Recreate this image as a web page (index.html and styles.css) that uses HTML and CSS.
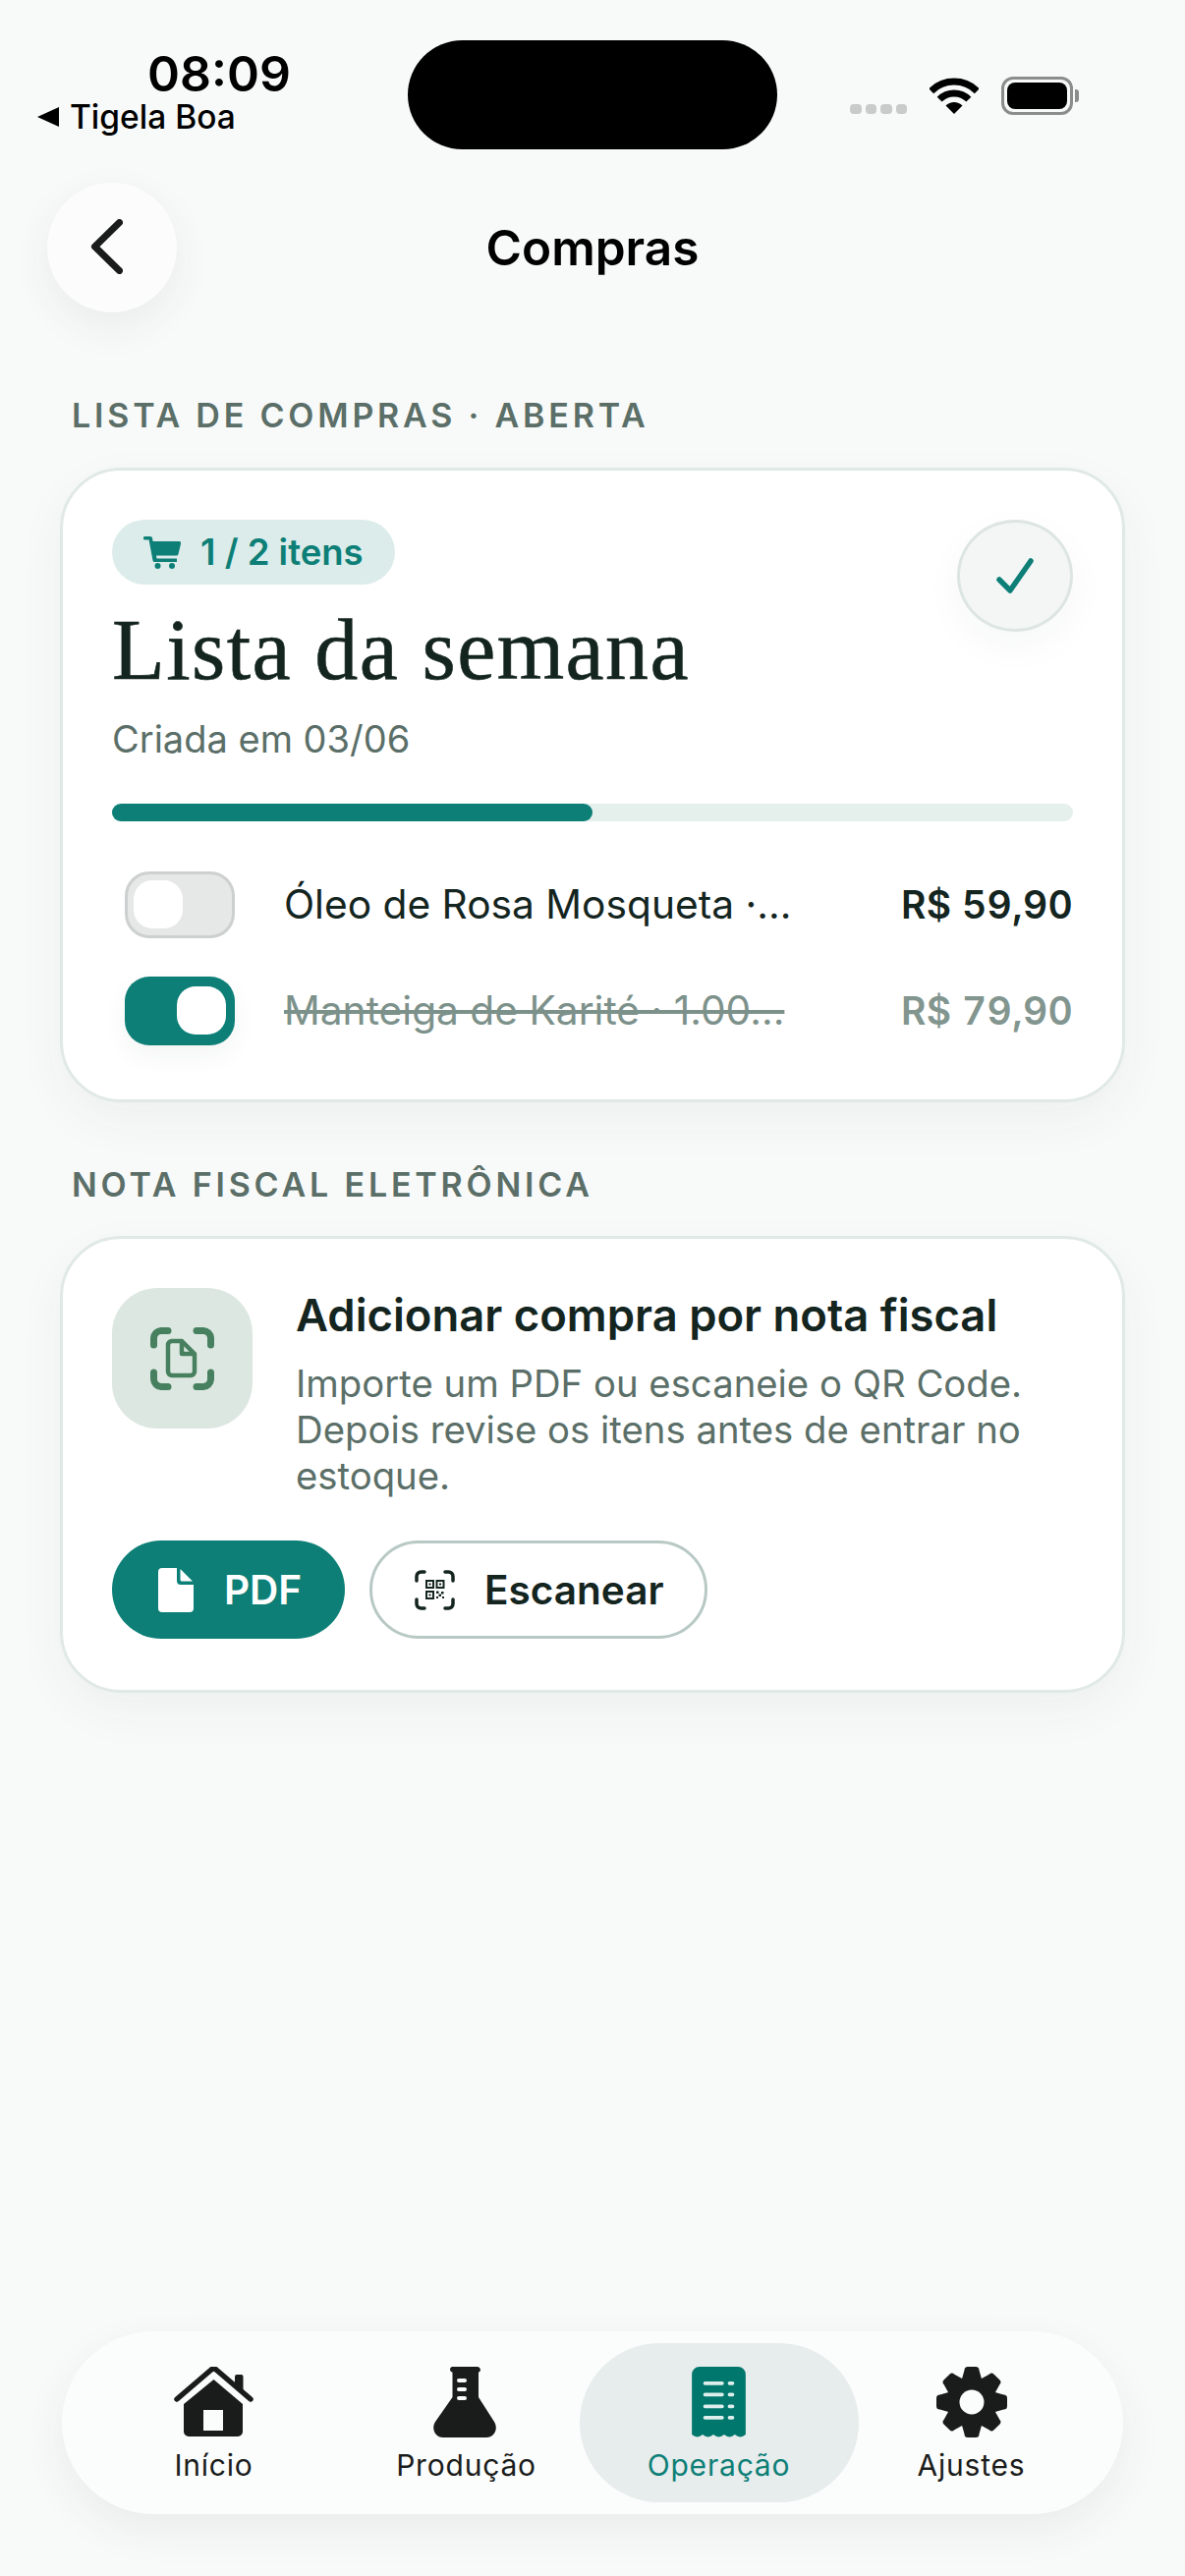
FILE: index.html
```html
<!DOCTYPE html>
<html lang="pt-BR">
<head>
    <meta charset="UTF-8">
    <meta name="viewport" content="width=device-width, initial-scale=1.0">
    <title>Compras</title>
    <link rel="stylesheet" href="styles.css">
</head>
<body>

    <div class="status">
        <div class="status-left">
            <div class="time">08:09</div>
            <div class="back-app"><span class="back-arrow"></span>Tigela Boa</div>
        </div>
        <div class="island"></div>
        <div class="status-right">
            <div class="signal"><span></span><span></span><span></span><span></span></div>
            <svg class="wifi" viewBox="0 0 50 37" width="50" height="37">
                <path d="M1.7 13.7A33 33 0 0 1 48.3 13.7" fill="none" stroke="#000" stroke-width="7"/>
                <path d="M10.15 22.15A21 21 0 0 1 39.85 22.15" fill="none" stroke="#000" stroke-width="7"/>
                <path d="M25 37L16.5 28.5A12 12 0 0 1 33.5 28.5Z" fill="#000"/>
            </svg>
            <div class="battery"><div class="battery-level"></div></div>
            <div class="battery-tip"></div>
        </div>
    </div>

    <header class="top">
        <button class="back-btn">
            <svg viewBox="0 0 33 56" width="33" height="56">
                <path d="M29.5 3.5L4.500 28L29.5 52.5" fill="none" stroke="#1a1c1b" stroke-width="7" stroke-linecap="round" stroke-linejoin="round"/>
            </svg>
        </button>
        <h1>Compras</h1>
    </header>

    <main class="content">
        <h2 class="section-label">LISTA DE COMPRAS · ABERTA</h2>
        <section class="card list-card">
            <div class="list-head">
                <div>
                    <div class="pill">
                        <svg viewBox="0 0 38 33" width="38" height="33">
                            <path d="M1.5 0H7a2 2 0 0 1 2 1.6L9.6 5H36a2 2 0 0 1 2 2.4L35.5 18a2 2 0 0 1-2 1.6H13l.6 3H34v3.4H11.5a2 2 0 0 1-2-1.6L5.6 3.4H1.5a1.7 1.7 0 0 1 0-3.4Z" fill="#0d7f77"/>
                            <circle cx="14.5" cy="30" r="3" fill="#0d7f77"/>
                            <circle cx="29" cy="30" r="3" fill="#0d7f77"/>
                        </svg>
                        <span>1 / 2 itens</span>
                    </div>
                    <div class="list-title">Lista da semana</div>
                    <div class="list-date">Criada em 03/06</div>
                </div>
                <button class="check-btn">
                    <svg viewBox="0 0 38 37" width="38" height="37">
                        <path d="M3 22L14 33L35 3" fill="none" stroke="#0d7f77" stroke-width="5.500" stroke-linecap="round" stroke-linejoin="round"/>
                    </svg>
                </button>
            </div>
            <div class="progress"><div class="progress-fill" style="width: 50%"></div></div>
            <div class="item">
                <div class="switch"><div class="knob"></div></div>
                <div class="item-name">Óleo de Rosa Mosqueta ·...</div>
                <div class="item-price">R$ 59,90</div>
            </div>
            <div class="item done">
                <div class="switch on"><div class="knob"></div></div>
                <div class="item-name">Manteiga de Karité · 1.00...</div>
                <div class="item-price">R$ 79,90</div>
            </div>
        </section>

        <h2 class="section-label second">NOTA FISCAL ELETRÔNICA</h2>
        <section class="card invoice-card">
            <div class="invoice-row">
                <div class="invoice-icon">
                    <svg viewBox="0 0 65 64" width="65" height="64" fill="none" stroke="#46805f" stroke-linecap="round" stroke-linejoin="round">
                        <path d="M3.500 18V11a8 8 0 0 1 7.500-7.500h7M47 3.500h7a8 8 0 0 1 7.500 7.500v7M61.500 46v7a8 8 0 0 1-7.500 7.500h-7M18 60.500h-7a8 8 0 0 1-7.500-7.500v-7" stroke-width="7"/>
                        <path d="M22 14h10l13 13v18a4 4 0 0 1-4 4H22a4 4 0 0 1-4-4V18a4 4 0 0 1 4-4ZM32 14v13h13" stroke-width="4.500"/>
                    </svg>
                </div>
                <div class="invoice-text">
                    <h3>Adicionar compra por nota fiscal</h3>
                    <p>Importe um PDF ou escaneie o QR Code. Depois revise os itens antes de entrar no estoque.</p>
                </div>
            </div>
            <div class="invoice-actions">
                <button class="btn btn-primary">
                    <svg viewBox="0 0 36 45" width="36" height="45">
                        <path d="M4 0H19V13a4 4 0 0 0 4 4H36V41a4 4 0 0 1-4 4H4a4 4 0 0 1-4-4V4a4 4 0 0 1 4-4Z" fill="#fff"/>
                        <path d="M22.5 1L35 13.5H24a1.5 1.5 0 0 1-1.5-1.5Z" fill="#fff"/>
                    </svg>
                    PDF
                </button>
                <button class="btn btn-outline">
                    <svg viewBox="0 0 41 41" width="41" height="41" fill="none" stroke="#14251f">
                        <path d="M2 11V6.500a4.500 4.500 0 0 1 4.500-4.500H10M31 2h3.500A4.500 4.500 0 0 1 39 6.500V11M39 30v4.500a4.500 4.500 0 0 1-4.500 4.500H31M10 39H6.500A4.500 4.500 0 0 1 2 34.500V30" stroke-width="3.500" stroke-linecap="round"/>
                        <path d="M12 11h7v7h-7ZM22.500 11h7v7h-7ZM12 22h7v7h-7Z" stroke-width="2"/>
                        <path d="M14.500 13.500h2v2h-2ZM25 13.500h2v2h-2ZM14.500 24.500h2v2h-2ZM22 21.500h2.500V24H22ZM27 22h2.500v2.500H27ZM24.500 24.500H27V27h-2.500ZM28 27h2v2h-2ZM22 27h2v2h-2Z" fill="#14251f" stroke="none"/>
                    </svg>
                    Escanear
                </button>
            </div>
        </section>
    </main>

    <nav class="tabbar">
        <a class="tab">
            <svg viewBox="0 0 81 72" width="81" height="72">
                <path d="M3 33L38 3Q40.500 1 43 3L78 33" fill="none" stroke="#1a1c1b" stroke-width="5.500" stroke-linecap="round"/>
                <path d="M62 10a2 2 0 0 1 2-2h4.500a2 2 0 0 1 2 2V28L62 20Z" fill="#1a1c1b"/>
                <path fill-rule="evenodd" d="M40.500 13L70 38V66a5 5 0 0 1-5 5H15a5 5 0 0 1-5-5V38ZM30 44V65H50V44Z" fill="#1a1c1b"/>
            </svg>
            <span>Início</span>
        </a>
        <a class="tab">
            <svg class="flask" viewBox="0 0 64 72" width="64" height="72">
                <path fill-rule="evenodd" d="M19 0H45a3 3 0 0 1 1 5.800V31L62 56C66.500 63 62 72 54 72H10C2 72-2.500 63 2 56L19.500 31V5.800A3 3 0 0 1 19 0ZM26 12a2 2 0 0 0 0 4h6a2 2 0 0 0 0-4ZM26 21a2 2 0 0 0 0 4h6a2 2 0 0 0 0-4ZM26 30a2 2 0 0 0 0 4h6a2 2 0 0 0 0-4Z" fill="#1a1c1b"/>
            </svg>
            <span>Produção</span>
        </a>
        <a class="tab active">
            <svg viewBox="0 0 57 75" width="57" height="75">
                <path d="M8 0H49a8 8 0 0 1 8 8V72q-5.700 5-11.400 0q-5.700 5-11.400 0q-5.700 5-11.400 0q-5.700 5-11.400 0q-5.700 5-11.400 0V8a8 8 0 0 1 8-8Z" fill="#00776c"/>
                <path d="M14 17.500H32M14 29.500H32M14 42H32M14 54H32M40 17.500H43M40 29.500H43M40 42H43M40 54H43" stroke="#dcefec" stroke-width="4" stroke-linecap="round" fill="none"/>
            </svg>
            <span>Operação</span>
        </a>
        <a class="tab">
            <svg viewBox="-36 -36 72 72" width="72" height="72">
                <defs>
                    <path id="tooth" d="M-7.500-32.500a3.500 3.500 0 0 1 3.500-3.500h8a3.500 3.500 0 0 1 3.500 3.500L11-20H-11Z" fill="#1a1c1b"/>
                </defs>
                <circle r="26" fill="#1a1c1b"/>
                <use href="#tooth"/>
                <use href="#tooth" transform="rotate(45)"/>
                <use href="#tooth" transform="rotate(90)"/>
                <use href="#tooth" transform="rotate(135)"/>
                <use href="#tooth" transform="rotate(180)"/>
                <use href="#tooth" transform="rotate(225)"/>
                <use href="#tooth" transform="rotate(270)"/>
                <use href="#tooth" transform="rotate(315)"/>
                <circle r="12.500" fill="#fbfdfc"/>
            </svg>
            <span>Ajustes</span>
        </a>
    </nav>

</body>
</html>
```

FILE: styles.css
```css
* {
    box-sizing: border-box;
}
body {
    font-family: Inter, "Liberation Sans", sans-serif;
    margin: 0;
    width: 1206px;
    height: 2622px;
    overflow: hidden;
    background-color: #f8faf9;
    color: #14251f;
    display: flex;
    flex-direction: column;
}
button {
    font-family: inherit;
    cursor: pointer;
}

/* status bar */
.status {
    display: flex;
    padding: 41px 0 0 38px;
}
.status-left {
    width: 377px;
    height: 111px;
    color: #000;
}
.time {
    font-size: 50px;
    font-weight: 600;
    line-height: 50px;
    margin: 9px 0 0 112px;
}
.back-app {
    display: flex;
    align-items: center;
    font-size: 33.500px;
    font-weight: 500;
    line-height: 38px;
    margin-top: 0;
}
.back-arrow {
    width: 0;
    height: 0;
    margin-right: 11px;
    border-top: 10px solid transparent;
    border-bottom: 10px solid transparent;
    border-right: 22px solid #000;
}
.island {
    width: 376px;
    height: 111px;
    border-radius: 56px;
    background: #000;
}
.status-right {
    display: flex;
    align-items: flex-end;
    height: 39px;
    margin: 37px 0 0 74px;
}
.signal {
    display: flex;
    gap: 4px;
    margin: 0 23px 1px 0;
}
.signal span {
    width: 11.500px;
    height: 10px;
    border-radius: 4px;
    background: #c9cbca;
}
.wifi {
    margin-right: 23px;
    margin-bottom: 1px;
}
.battery {
    width: 73px;
    height: 39px;
    padding: 3px;
    border: 3px solid #8b8d8c;
    border-radius: 12px;
}
.battery-level {
    width: 100%;
    height: 100%;
    border-radius: 8px;
    background: #000;
}
.battery-tip {
    width: 4px;
    height: 13px;
    margin: 0 0 13px 2px;
    border-radius: 0 3px 3px 0;
    background: #8b8d8c;
}

/* top bar */
.top {
    display: grid;
    grid-template-columns: 132px 1fr 132px;
    align-items: center;
    margin-top: 34px;
    padding: 0 48px;
}
.back-btn {
    width: 132px;
    height: 132px;
    padding: 0 12px 0 0;
    border: none;
    border-radius: 50%;
    background: #fbfcfb;
    box-shadow: 0 14px 40px rgba(30, 50, 45, 0.07);
}
.top h1 {
    margin: 0;
    text-align: center;
    font-size: 49.500px;
    font-weight: 600;
    line-height: 60px;
    color: #000;
}

/* content */
.content {
    padding: 0 61px;
}
.section-label {
    margin: 85px 0 0 12px;
    font-size: 34px;
    font-weight: 600;
    line-height: 40px;
    letter-spacing: 3.800px;
    color: #5b6f68;
}
.section-label.second {
    margin-top: 64px;
}
.card {
    margin-top: 33px;
    padding: 50px 50px 56px;
    background: #fff;
    border: 3px solid #e0e9e6;
    border-radius: 62px;
    box-shadow: 0 18px 50px rgba(30, 60, 50, 0.05);
}
.invoice-card {
    margin-top: 32px;
    padding-bottom: 52px;
}
.list-head {
    display: flex;
    justify-content: space-between;
    align-items: flex-start;
}
.pill {
    display: inline-flex;
    align-items: center;
    gap: 20px;
    height: 66px;
    padding: 0 32px;
    border-radius: 33px;
    background: #dcecea;
    color: #0d7f77;
    font-size: 36.500px;
    font-weight: 600;
}
.list-title {
    margin-top: 22px;
    font-family: "Liberation Serif", serif;
    font-size: 88px;
    line-height: 90px;
    letter-spacing: 1.400px;
    -webkit-text-stroke: 0.6px #14251f;
    color: #14251f;
}
.list-date {
    margin-top: 22px;
    font-size: 38px;
    line-height: 46px;
    color: #5b6f68;
}
.check-btn {
    display: flex;
    align-items: center;
    justify-content: center;
    width: 118px;
    height: 114px;
    padding: 0;
    border: 3px solid #dde5e3;
    border-radius: 50%;
    background: #f4f6f6;
    box-shadow: 0 14px 40px rgba(30, 50, 45, 0.04);
}
.progress {
    height: 18px;
    margin-top: 43px;
    border-radius: 9px;
    background: #e5f0ed;
}
.progress-fill {
    height: 100%;
    border-radius: 9px;
    background: #0d7f77;
}
.item {
    display: flex;
    align-items: center;
    height: 69px;
    margin: 50px 0 0 13px;
}
.item + .item {
    margin-top: 39px;
}
.switch {
    display: flex;
    align-items: center;
    width: 112px;
    height: 68px;
    padding: 0 6px;
    flex-shrink: 0;
    border: 3px solid #cdd0d0;
    border-radius: 25px;
    background: #e6e7e7;
}
.switch.on {
    justify-content: flex-end;
    height: 70px;
    padding: 0 9px;
    border: none;
    background: #0d7f77;
    box-shadow: 0 10px 24px rgba(30, 60, 50, 0.06);
}
.knob {
    width: 50px;
    height: 49px;
    border-radius: 19px;
    background: #fff;
}
.item-name {
    flex: 1;
    margin-left: 50px;
    font-size: 40.700px;
    white-space: nowrap;
}
.item-price {
    font-size: 39px;
    font-weight: 600;
    font-variant-numeric: tabular-nums;
    letter-spacing: 0.300px;
    white-space: nowrap;
}
.done .item-name {
    color: #7d918b;
    text-decoration: line-through;
}
.done .item-price {
    color: #82958f;
}
.invoice-row {
    display: flex;
    gap: 44px;
}
.invoice-icon {
    display: flex;
    align-items: center;
    justify-content: center;
    width: 143px;
    height: 143px;
    flex-shrink: 0;
    border-radius: 46px;
    background: #dde7e2;
}
.invoice-text h3 {
    margin: 0;
    font-size: 45.400px;
    font-weight: 600;
    line-height: 56px;
    color: #14251f;
}
.invoice-text p {
    margin: 18px 0 0;
    font-size: 38.300px;
    line-height: 47px;
    color: #5b6f68;
}
.invoice-actions {
    display: flex;
    gap: 25px;
    margin-top: 42px;
}
.btn {
    display: flex;
    align-items: center;
    height: 100px;
    border-radius: 50px;
    font-size: 40.500px;
    font-weight: 600;
}
.btn-primary {
    gap: 31px;
    width: 237px;
    padding: 0 0 0 47px;
    border: none;
    background: #0d7f77;
    color: #fff;
}
.btn-outline {
    gap: 30px;
    width: 344px;
    padding: 0 0 0 43px;
    border: 3px solid #b8c9c5;
    background: #fff;
    color: #14251f;
}

/* bottom nav */
.tabbar {
    display: grid;
    grid-template-columns: repeat(4, 257px);
    margin: auto 63px 63px;
    padding: 12px 0 12px 26px;
    height: 186px;
    width: 1080px;
    border-radius: 93px;
    background: #fbfdfc;
    box-shadow: 0 16px 44px rgba(30, 50, 45, 0.07);
}
.tab {
    display: flex;
    flex-direction: column;
    align-items: center;
    height: 162px;
    padding-top: 24px;
    border-radius: 81px;
    font-size: 30px;
    font-weight: 400;
    letter-spacing: 0.800px;
    color: #1a1c1b;
}
.tab svg {
    height: 72px;
    flex-shrink: 0;
}
.tab .flask {
    margin-right: 3px;
}
.tab span {
    margin-top: 10px;
    line-height: 36px;
}
.tab.active {
    margin: 0 -13.500px;
    background: #e7ecec;
    color: #0d7f77;
}
```
